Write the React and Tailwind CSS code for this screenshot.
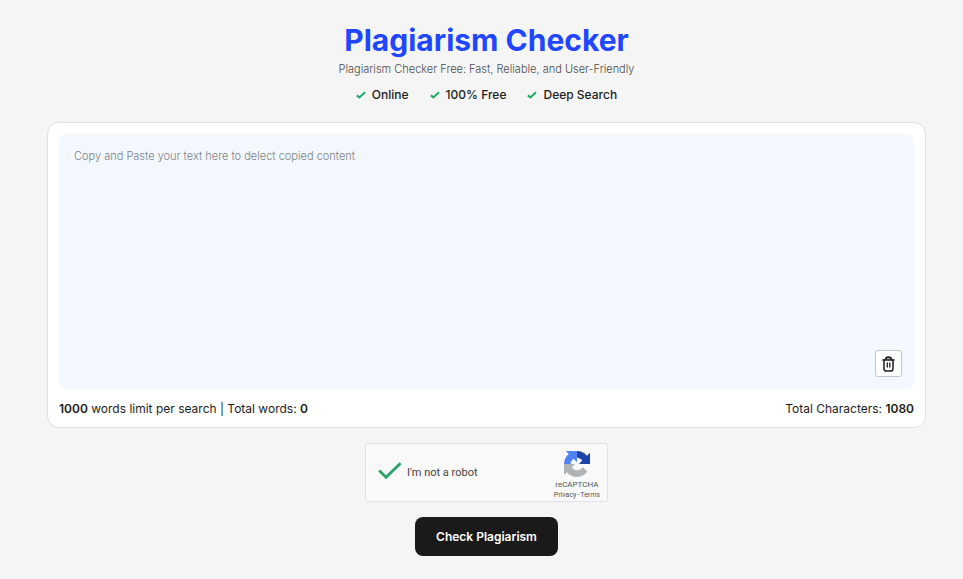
import { useState } from "react"

const features = ["Online", "100% Free", "Deep Search"]

function TickIcon({ className }) {
  return (
    <svg viewBox="0 0 10 8" className={className} fill="none" aria-hidden="true">
      <path d="M.8 4.4 3.4 6.4 9 1.2" stroke="#1fa968" strokeWidth="2" />
    </svg>
  )
}

function TrashIcon() {
  return (
    <svg
      width="13"
      height="16"
      viewBox="0 0 13 16"
      fill="none"
      stroke="#1f1f1f"
      strokeWidth="1.5"
      strokeLinecap="round"
      aria-hidden="true"
    >
      <path d="M3.4 3.6C3.6 1.8 4.4 1 6.5 1s2.9.8 3.1 2.6" fill="#9a9a9a" />
      <path d="M.9 3.9h11.2" />
      <path d="M2 4.2v8.2c0 1.7.8 2.6 2.4 2.6h4.2c1.6 0 2.4-.9 2.4-2.6V4.2" />
      <path d="M5.3 7v4M7.8 7v4" strokeWidth="1.3" />
    </svg>
  )
}

function RecaptchaLogo() {
  return (
    <svg width="26" height="26" viewBox="0 0 64 64" aria-hidden="true">
      <path
        d="M64 31.955c0-.46-.011-.918-.032-1.373V4.604l-7.182 7.182C50.91 4.59 41.965 0 31.95 0v16.3c.49 0 .86.06 1.14.16 5 .4 9.34 3.16 11.89 7.17l-8.33 8.33L64 31.955"
        fill="#1c44a9"
      />
      <path
        d="M31.86.004c-.458.001-.915.012-1.369.033H4.594l7.16 7.16C4.58 13.09 0 22.06 0 32.107h16.26c0-.492.058-.871.16-1.146.397-5.021 3.145-9.371 7.148-11.928l8.305 8.354L31.86.004"
        fill="#5180f5"
      />
      <path
        d="M.001 31.955c.001.46.012.918.033 1.373v25.978l7.16-7.182C13.05 59.32 21.97 63.91 31.99 63.91c10.42 0 19.68-4.97 25.54-12.67L45.76 39.34a15.68 15.68 0 0 1-4.77 5.35c-2.05 1.6-4.96 2.91-9 2.91-.49 0-.87-.06-1.14-.16-5.01-.4-9.34-3.16-11.89-7.17l8.33-8.33L.001 31.955"
        fill="#b0b3b5"
      />
    </svg>
  )
}

function Recaptcha() {
  return (
    <div className="mt-[15px] flex h-[59px] w-[243px] items-center rounded-[3px] border border-[#dfe1e5] bg-[#f9f9f9] pr-[7px] pl-3">
      <label className="relative flex flex-1 items-center gap-[5px] font-[Roboto,sans-serif] text-[11px] leading-4 text-[#444]">
        <input type="checkbox" defaultChecked className="peer h-6 w-6 appearance-none" />
        <svg
          width="24"
          height="18"
          viewBox="0 0 24 18"
          fill="none"
          className="pointer-events-none absolute left-0 -mt-1 opacity-0 peer-checked:opacity-100"
          aria-hidden="true"
        >
          <path d="M1.2 8.6 8 15.2 22.6 1.2" stroke="#2aa26a" strokeWidth="2.8" />
        </svg>
        I'm not a robot
      </label>
      <div className="flex flex-col items-center pt-1 font-[Roboto,sans-serif] text-[#555]">
        <RecaptchaLogo />
        <span className="mt-0.5 text-[8px] leading-3">reCAPTCHA</span>
        <div className="flex gap-px text-[7px] leading-2">
          <a href="#privacy">Privacy</a>
          <span>-</span>
          <a href="#terms">Terms</a>
        </div>
      </div>
    </div>
  )
}

export default function App() {
  const [text, setText] = useState("")

  const wordCount = text.trim() ? text.trim().split(/\s+/).length : 0
  const characters = text.length || 1080

  return (
    <main className="flex min-h-screen flex-col items-center bg-[#f5f5f5] pt-5 pr-[37px] pb-6 pl-[47px] font-[Inter,sans-serif] text-[#1c1c1c]">
      <h1 className="text-[30px] leading-10 font-bold text-[#1f47ff]">Plagiarism Checker</h1>
      <p className="text-[11px] leading-[18px] font-light text-[#4c4c4c]">
        Plagiarism Checker Free: Fast, Reliable, and User-Friendly
      </p>

      {/* Features */}
      <ul className="mt-2 flex gap-[21px] text-[12px] leading-[18px] font-medium">
        {features.map((feature) => (
          <li key={feature} className="flex items-center gap-1.5">
            <TickIcon className="h-2 w-2.5" />
            {feature}
          </li>
        ))}
      </ul>

      {/* Text editor */}
      <section className="mt-[18px] w-full rounded-xl border border-[#e0e0e0] bg-white p-[11px] pb-2">
        <div className="relative">
          <textarea
            aria-label="Text to check"
            className="block h-[255px] w-full resize-none rounded-lg bg-[#f3f8ff] px-[15px] py-3.5 text-[11px] leading-4 font-light outline-none placeholder:text-[#808285]"
            placeholder="Copy and Paste your text here to delect copied content"
            value={text}
            onChange={(e) => setText(e.target.value)}
          />
          <button
            type="button"
            aria-label="Clear text"
            onClick={() => setText("")}
            className="absolute right-3 bottom-3 flex h-[27px] w-[27px] items-center justify-center rounded-[3px] border border-[#c4c4c4] bg-white"
          >
            <TrashIcon />
          </button>
        </div>
        <div className="mt-2.5 flex justify-between text-[12px] leading-5">
          <p>
            <b className="font-semibold">1000</b> words limit per search | Total words:{" "}
            <b className="font-semibold">{wordCount}</b>
          </p>
          <p>
            Total Characters: <b className="font-semibold">{characters}</b>
          </p>
        </div>
      </section>

      <Recaptcha />

      <button
        type="button"
        className="mt-[15px] h-[39px] rounded-lg bg-[#1a1a1a] px-[21px] text-[12px] leading-5 font-semibold text-white"
      >
        Check Plagiarism
      </button>
    </main>
  )
}
